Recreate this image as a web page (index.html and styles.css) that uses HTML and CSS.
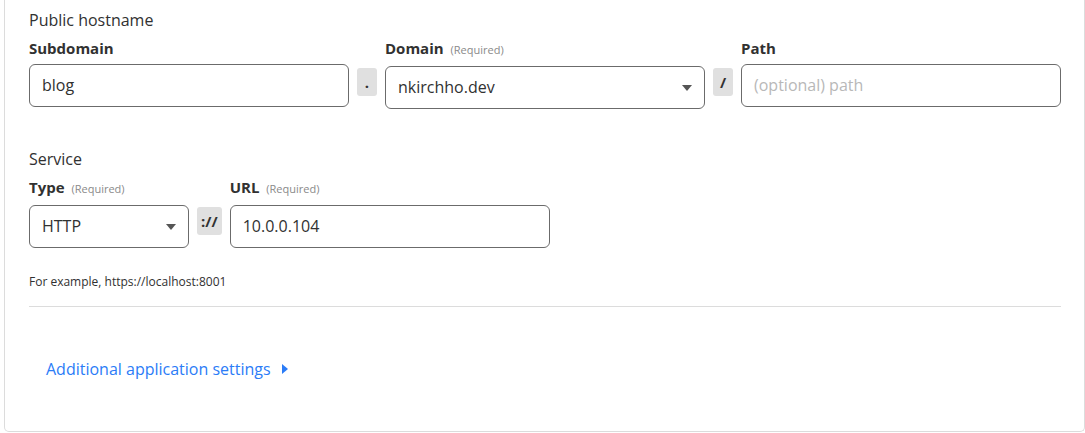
FILE: index.html
```html
<!DOCTYPE html>
<html>
<head>
<meta charset="utf-8">
<link rel="stylesheet" href="styles.css">
</head>
<body>
<div class="card">
  <div class="section-title">Public hostname</div>
  <div class="row">
    <div class="field">
      <div class="label">Subdomain</div>
      <div class="input">blog</div>
    </div>
    <div class="sep">.</div>
    <div class="field">
      <div class="label">Domain <span class="req">(Required)</span></div>
      <div class="input select">nkirchho.dev<span class="arrow"></span></div>
    </div>
    <div class="sep">/</div>
    <div class="field">
      <div class="label">Path</div>
      <div class="input placeholder">(optional) path</div>
    </div>
  </div>

  <div class="section-title service">Service</div>
  <div class="row">
    <div class="field narrow">
      <div class="label">Type <span class="req">(Required)</span></div>
      <div class="input select">HTTP<span class="arrow"></span></div>
    </div>
    <div class="sep wide">://</div>
    <div class="field">
      <div class="label">URL <span class="req">(Required)</span></div>
      <div class="input">10.0.0.104</div>
    </div>
  </div>
  <div class="help">For example, https://localhost:8001</div>
  <div class="divider"></div>
  <div class="more"><span class="link">Additional application settings</span><span class="caret"></span></div>
</div>
</body>
</html>
```

FILE: styles.css
```css
html, body {
  margin: 0;
  padding: 0;
  background: #ffffff;
}
body {
  font-family: "Open Sans", "Noto Sans", sans-serif;
  color: #313131;
  padding-left: 4px;
}
.card {
  width: 1032px;
  border: 1px solid #dcdcdc;
  border-top: none;
  border-radius: 0 0 5px 5px;
  padding: 10px 23px 50px 24px;
}
.section-title {
  font-size: 16px;
  line-height: 20px;
  color: #313131;
}
.section-title.service {
  margin-top: 40px;
}
.row {
  display: flex;
  align-items: flex-start;
  gap: 8px;
  margin-top: 8px;
}
.field {
  width: 320px;
  display: flex;
  flex-direction: column;
}
.field.narrow {
  width: 160px;
}
.label {
  font-size: 15px;
  line-height: 20px;
  font-weight: 700;
  color: #313131;
}
.req {
  font-size: 11px;
  font-weight: 400;
  color: #8a8a8a;
  margin-left: 3px;
}
.input {
  margin-top: 6px;
  box-sizing: border-box;
  height: 43px;
  border: 1px solid #6b6b6b;
  border-radius: 6px;
  padding: 0 12px;
  font-size: 16px;
  line-height: 41px;
  color: #313131;
  display: flex;
  align-items: center;
  justify-content: space-between;
}
.input.placeholder {
  color: #b8b8b8;
}
.arrow {
  width: 0;
  height: 0;
  border-left: 5px solid transparent;
  border-right: 5px solid transparent;
  border-top: 6px solid #555;
}
.sep {
  margin-top: 30px;
  box-sizing: border-box;
  min-width: 20px;
  height: 28px;
  padding: 0 3px;
  background: #e0e0e0;
  border-radius: 3px;
  font-size: 15px;
  line-height: 28px;
  font-weight: 700;
  text-align: center;
  color: #313131;
}
.sep.wide {
  padding: 0 4px;
}
.help {
  margin-top: 26px;
  font-size: 12px;
  line-height: 16px;
  color: #313131;
}
.divider {
  margin-top: 16px;
  height: 1px;
  background: #dcdcdc;
}
.more {
  margin-top: 50px;
  padding-left: 17px;
  display: flex;
  align-items: center;
  font-size: 16px;
  line-height: 24px;
}
.link {
  color: #2b7cf7;
}
.caret {
  margin-left: 11px;
  width: 0;
  height: 0;
  border-top: 5px solid transparent;
  border-bottom: 5px solid transparent;
  border-left: 6px solid #2b7cf7;
}
```
